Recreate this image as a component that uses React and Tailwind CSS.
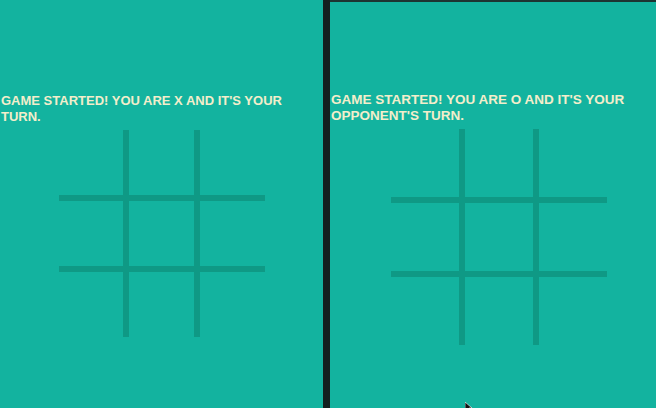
export default function App() {
  const Board = ({ cols, cell }) => (
    <div className={`grid w-fit gap-[6px] bg-[#0f9985] ${cols}`}>
      {Array.from({ length: 9 }).map((_, i) => (
        <div key={i} className={`bg-[#13b39f] ${cell}`} />
      ))}
    </div>
  );

  return (
    <div className="relative flex h-[408px] w-[656px] overflow-hidden bg-[#13b39f] font-['Liberation_Sans',Arial,sans-serif]">
      {/* left window */}
      <div className="flex w-[323px] shrink-0 flex-col items-start bg-[#13b39f] pl-[1px] pt-[93px]">
        <p className="w-[310px] text-[13px] font-bold uppercase leading-4 text-[#f3eecb]">
          Game started! You are X and it's your turn.
        </p>
        <div className="mt-[5px] ml-[58px]">
          <Board cols="grid-cols-[64px_65px_65px]" cell="h-[65px]" />
        </div>
      </div>

      {/* editor gap */}
      <div className="w-[7px] shrink-0 bg-[#13201f]" />

      {/* right window */}
      <div className="flex flex-1 flex-col items-start border-t-2 border-[#1d3532] bg-[#13b39f] pl-[1px] pt-[90px]">
        <p className="w-[310px] text-[13.5px] font-bold uppercase leading-4 text-[#f3eecb]">
          Game started! You are O and it's your opponent's turn.
        </p>
        <div className="mt-[5px] ml-[60px]">
          <Board cols="grid-cols-[68px_68px_68px]" cell="h-[68px]" />
        </div>
      </div>

      {/* mouse cursor */}
      <svg className="absolute left-[465px] top-[402px]" width="8" height="10" viewBox="0 0 8 10">
        <path d="M0 0 L0 9 L2.5 6.5 L4.5 10 L6 9 L4 6 L7 6 Z" fill="#111" stroke="#fff" strokeWidth="0.6" />
      </svg>
    </div>
  );
}
